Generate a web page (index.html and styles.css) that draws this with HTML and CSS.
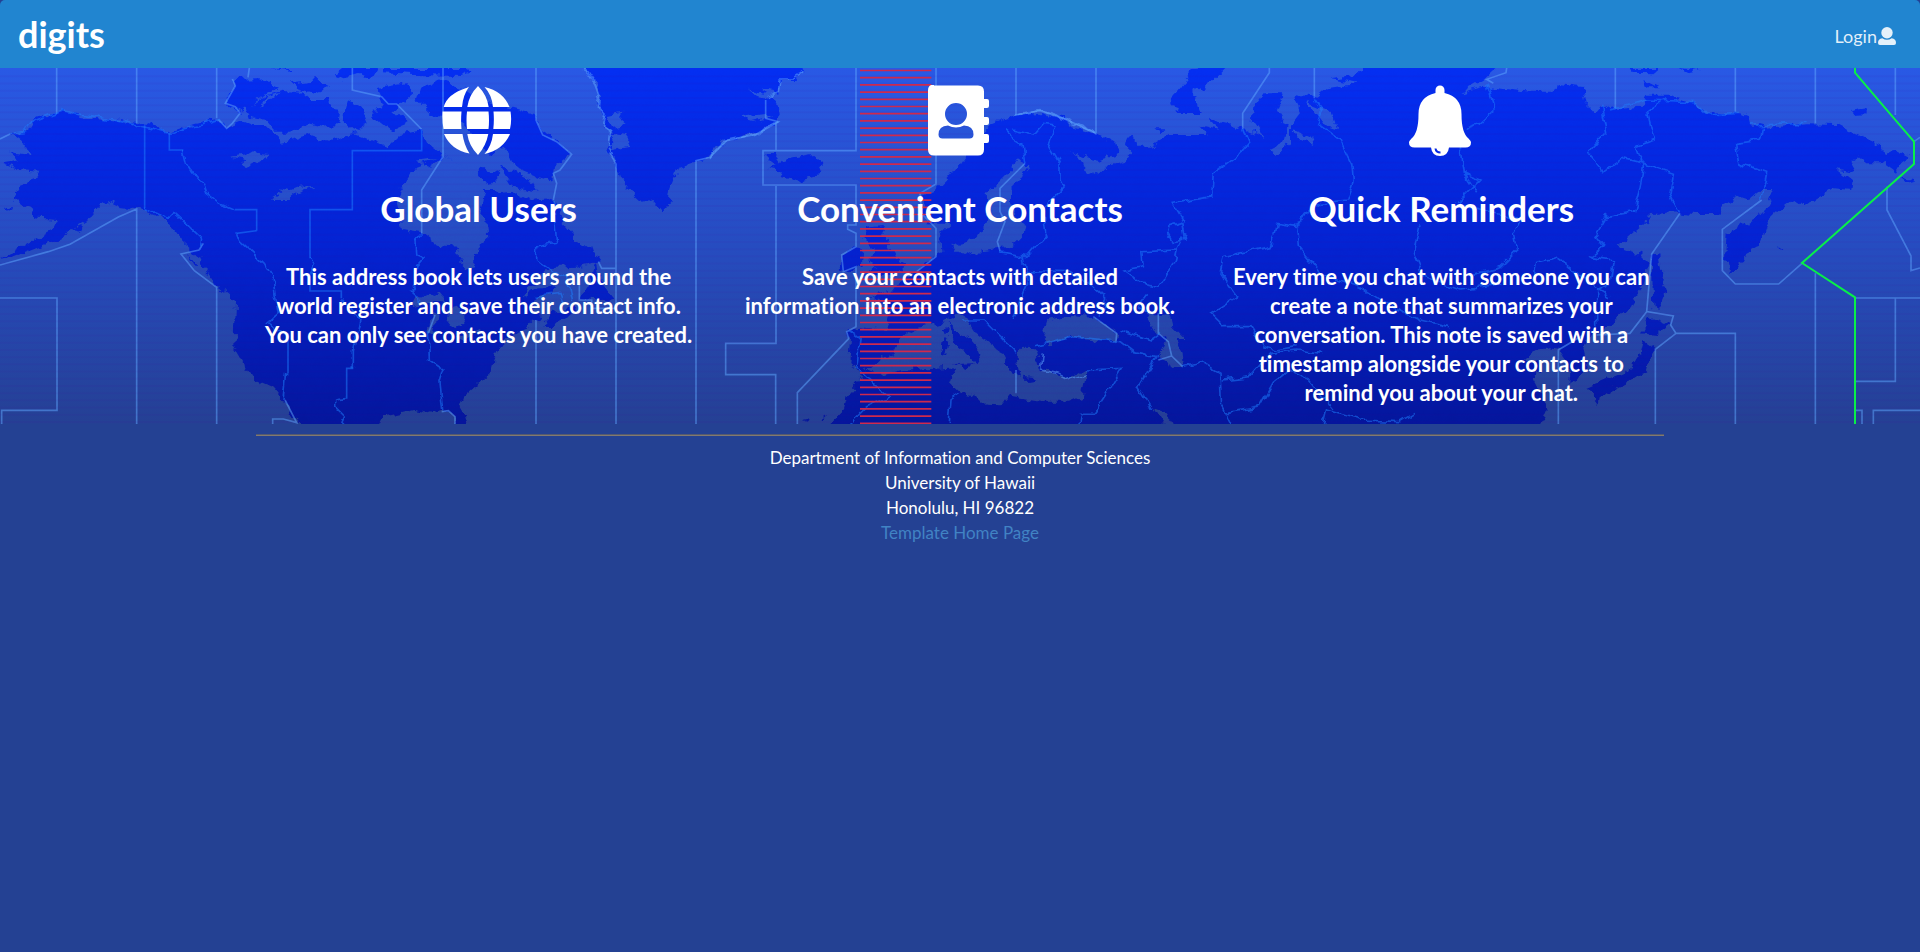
FILE: index.html
```html
<!DOCTYPE html>
<html lang="en">
<head>
<meta charset="utf-8">
<title>digits</title>
<link rel="stylesheet" href="styles.css">
</head>
<body>
<header class="navbar">
  <a class="brand" href="#">digits</a>
  <a class="login" href="#">Login<svg class="user-icon" viewBox="0 0 18 18" aria-hidden="true"><circle cx="9" cy="5.7" r="5.7"/><path d="M4.3 11.2q4.7 3 9.4 0Q18 11.6 18 16q0 2-2 2H2q-2 0-2-2Q0 11.600 4.300 11.200Z"/></svg></a>
</header>
<main class="hero">
  <svg class="map" viewBox="0 204 5760 1068" preserveAspectRatio="xMidYMin slice" aria-hidden="true">
    <defs>
      <linearGradient id="sea" gradientUnits="userSpaceOnUse" x1="0" y1="204" x2="0" y2="1272">
        <stop offset="0" stop-color="#2959e5"/><stop offset=".5" stop-color="#264cc0"/><stop offset="1" stop-color="#254094"/>
      </linearGradient>
      <linearGradient id="ground" gradientUnits="userSpaceOnUse" x1="0" y1="204" x2="0" y2="1272">
        <stop offset="0" stop-color="#042ff2"/><stop offset=".5" stop-color="#0423d2"/><stop offset="1" stop-color="#04169c"/>
      </linearGradient>
      <filter id="coast" filterUnits="userSpaceOnUse" x="-40" y="160" width="5840" height="1160" color-interpolation-filters="sRGB">
        <feTurbulence type="fractalNoise" baseFrequency=".03" numOctaves="3" seed="4"/>
        <feDisplacementMap in="SourceGraphic" scale="34" xChannelSelector="R" yChannelSelector="G"/>
      </filter>
      <filter id="border" filterUnits="userSpaceOnUse" x="-40" y="160" width="5840" height="1160" color-interpolation-filters="sRGB">
        <feTurbulence type="fractalNoise" baseFrequency=".03" numOctaves="2" seed="9"/>
        <feDisplacementMap in="SourceGraphic" scale="26" xChannelSelector="R" yChannelSelector="G"/>
      </filter>
    </defs>
    <rect class="water" x="0" y="204" width="5760" height="1068"/>

    <g filter="url(#coast)">
      <!-- North America -->
      <path class="land" d="M30 402 75 398 95 365 130 348 185 332 245 348 350 362 410 368 470 382 508 400 585 375 655 358 680 385 730 365 760 378 800 378 850 425 930 405 990 425 1065 400 1120 420 1165 440 1200 405 1265 390 1290 440 1330 470 1400 500 1440 570 1480 570 1500 585 1550 580 1590 600 1650 595 1670 615 1680 660 1705 690 1720 715 1760 745 1800 770 1795 785 1730 800 1640 805 1610 830 1570 890 1610 862 1665 862 1655 880 1605 905 1595 930 1630 950 1600 962 1580 985 1540 1000 1500 1040 1480 1080 1475 1120 1440 1150 1395 1190 1385 1220 1405 1290 1372 1290 1360 1245 1320 1230 1290 1240 1240 1230 1200 1240 1150 1250 1130 1290 920 1290 880 1250 850 1200 820 1165 760 1140 735 1100 700 1040 705 910 690 890 640 850 610 800 590 760 545 720 510 670 470 640 435 628 360 618 320 600 265 660 200 700 120 740 50 768 0 780 60 745 160 690 175 660 100 655 95 620 40 600 35 580 55 555 110 535 115 515 60 510 5 487 60 478 30 455 90 465 75 435Z"/>
      <!-- Arctic islands -->
      <path class="land" d="M697 237 775 235 840 262 790 285 725 335 675 310 706 258ZM740 322 790 290 850 272 905 278 930 300 985 300 1020 340 1015 375 965 380 920 370 870 395 830 395 800 360 750 350ZM810 204 890 204 870 210ZM1020 204 1130 204 1110 240 1080 225 1030 235 1000 220ZM1145 204 1400 204 1420 215 1390 228 1240 225 1150 220ZM870 250 950 240 990 262 940 285 890 270ZM1040 300 1080 320 1100 370 1060 395 1030 370ZM1130 265 1220 250 1240 280 1180 330 1220 370 1170 390 1120 350 1145 310ZM1260 265 1320 240 1400 270 1440 300 1520 320 1610 345 1625 390 1680 425 1715 460 1665 500 1660 545 1610 530 1540 500 1520 455 1500 440 1470 465 1430 430 1400 380 1340 360 1290 340 1250 300ZM1440 500 1500 520 1470 555 1430 530ZM1500 495 1600 545 1610 575 1540 560Z"/>
      <!-- Greenland -->
      <path class="land" d="M1750 190 1765 215 1785 255 1800 290 1795 320 1818 345 1810 380 1835 395 1825 450 1850 490 1870 545 1900 585 1925 608 1960 600 1985 630 2010 600 2015 560 2040 500 2090 482 2140 460 2175 420 2270 400 2330 365 2342 350 2340 320 2300 290 2290 265 2335 275 2340 240 2375 240 2410 215 2400 190Z"/>
      <path class="water" d="M1820 345 1870 335 1860 355 1880 372 1830 380ZM1840 400 1880 405 1875 430 1890 440 1835 450ZM2220 355 2290 345 2320 350 2260 365ZM2250 272 2300 285 2330 300 2270 290Z"/>
      <!-- Iceland, Newfoundland, Nova Scotia -->
      <path class="land" d="M2300 465 2325 465 2340 485 2380 475 2440 465 2470 490 2450 525 2390 542 2345 530 2350 515 2305 510 2330 497 2300 487ZM1770 850 1790 780 1800 840 1840 890 1830 905 1740 895ZM1630 975 1660 935 1710 925 1740 935 1660 975Z"/>
      <!-- Hudson Bay and lakes -->
      <path class="water" d="M1330 470 1245 500 1200 570 1190 610 1200 650 1210 690 1265 700 1310 735 1370 740 1375 780 1405 815 1425 790 1430 745 1465 715 1462 675 1435 650 1450 575 1430 510ZM1250 485 1330 475 1290 500ZM690 470 740 462 760 450 780 462 808 465 770 485 740 500 720 498 740 480ZM815 600 850 580 840 565 870 572 900 560 945 558 900 575 870 600ZM800 290 840 280 860 265 780 320ZM1250 895 1290 875 1320 885 1340 910 1280 910 1240 915ZM1285 1000 1295 930 1310 945 1300 1010ZM1340 930 1370 920 1400 950 1385 970 1365 985 1345 960ZM1370 1010 1430 985 1440 990 1390 1020Z"/>
      <!-- British Isles -->
      <path class="land" d="M2605 680 2655 675 2635 708 2660 720 2685 770 2715 790 2710 812 2640 822 2590 832 2630 800 2605 775 2625 750 2590 715ZM2570 738 2592 760 2588 800 2530 815 2525 765Z"/>
      <!-- Eurasia and North Africa -->
      <path class="land" d="M2470 1290 2530 1230 2540 1190 2590 1135 2570 1100 2545 1090 2550 1020 2540 985 2580 980 2655 990 2670 940 2640 905 2615 885 2680 870 2750 815 2780 785 2825 760 2820 700 2845 672 2785 670 2765 640 2770 590 2805 575 2840 540 2880 490 2920 430 2950 400 2980 370 3045 345 3120 335 3190 355 3230 385 3285 400 3340 430 3350 462 3300 480 3230 465 3210 450 3250 485 3260 515 3290 530 3325 495 3380 480 3400 460 3375 430 3380 410 3400 408 3410 440 3450 440 3510 405 3620 405 3600 380 3660 395 3630 360 3720 380 3790 410 3755 360 3760 320 3790 280 3850 280 3830 330 3860 380 3850 430 3800 455 3840 465 3870 430 3870 380 3900 340 3880 300 3890 280 3950 290 3980 265 4080 250 3990 235 4060 225 4105 190 4505 190 4450 240 4380 280 4450 260 4590 275 4665 275 4670 255 4750 265 4760 310 4785 340 4805 315 4830 330 4920 320 4940 290 5000 290 5080 310 5120 345 5220 340 5245 350 5250 370 5290 380 5370 375 5420 370 5510 372 5560 400 5650 440 5655 460 5690 450 5730 470 5700 490 5685 515 5650 490 5590 490 5570 475 5550 520 5510 510 5555 545 5550 570 5500 565 5450 595 5410 625 5380 600 5345 625 5310 655 5295 700 5275 740 5240 760 5220 800 5190 825 5175 770 5180 700 5235 670 5290 640 5320 570 5285 570 5250 600 5220 590 5170 615 5155 645 5080 645 5020 640 4960 645 4920 680 4850 740 4920 765 4945 790 4930 860 4880 930 4830 980 4780 1005 4750 1050 4760 1100 4730 1145 4705 1140 4710 1100 4675 1050 4640 1045 4610 1050 4570 1075 4630 1090 4600 1135 4630 1190 4640 1230 4615 1290Z"/>
      <!-- Inland seas -->
      <path class="water" d="M2590 1115 2640 1125 2700 1110 2850 1100 2865 1110 2850 1150 2880 1180 2930 1190 2960 1220 3005 1222 3030 1190 3120 1205 3210 1205 3245 1190 3260 1110 3210 1140 3170 1120 3125 1110 3110 1050 3080 1040 3050 1070 3060 1130 3030 1110 3000 1050 2930 1000 2890 940 2830 965 2750 985 2700 1020 2680 1060ZM3030 510 3050 480 3090 495 3060 540 3030 570 3030 610 3080 690 3030 740 2940 750 2920 770 2880 750 2850 735 2930 715 2965 650 2960 580ZM3145 960 3130 1010 3150 1030 3220 1010 3300 1020 3350 1025 3355 1000 3280 950 3210 945ZM3440 945 3470 1000 3500 1020 3475 1080 3520 1105 3548 1100 3545 1050 3530 1020 3560 1020 3520 980 3510 940ZM3460 1225 3490 1235 3530 1290 3500 1290ZM3920 300 3990 330 4010 390 3980 380ZM3880 390 3930 410 3940 435 3890 410Z"/>
      <path class="land" d="M2840 965 2880 1000 2910 1020 2945 1060 2925 1092 2900 1060 2860 1030ZM2830 1020 2842 1025 2835 1065 2822 1060ZM2828 985 2840 980 2836 1010ZM2865 1092 2915 1090 2900 1110ZM3010 1075 3050 1100 3040 1125ZM3070 1130 3110 1135 3080 1140Z"/>
      <!-- Northern and Pacific islands -->
      <path class="land" d="M3600 190 3690 190 3640 240 3580 280 3605 345 3540 345 3510 300 3550 250ZM3625 350 3660 368 3640 375ZM3460 385 3490 385 3480 400ZM4880 204 4980 204 4960 220 4900 218ZM5030 204 5100 210 5060 220ZM4930 240 4980 265 4940 265ZM5550 330 5600 322 5600 340 5560 342ZM4955 765 4975 760 4985 830 5000 870 4975 930 4960 920ZM4950 950 5010 975 4970 1005 4925 1000ZM4930 1020 4960 1040 4940 1110 4880 1150 4820 1180 4790 1205 4760 1165 4840 1130 4890 1110 4920 1060ZM5700 535 5745 545 5720 552ZM5330 735 5350 748 5345 752ZM520 650 600 720 600 740 550 710ZM560 760 590 800 580 800ZM640 850 730 890 725 905 680 880ZM215 690 250 675 240 695ZM15 625 40 618 35 630ZM2405 1260 2430 1255 2420 1265ZM2460 1255 2475 1245 2465 1262Z"/>
    </g>

    <!-- Time zone lines over water -->
    <path class="zone" d="M170 204V342M410 204V370M650 204V355M748 204 744 232M697 237 706 258 676 310 706 320 720 340 697 370 680 385 655 358M0 417 30 402M0 795 145 755 210 733 355 651 410 627V1272M650 1272V862L583 812 543 762 597 750 610 730M0 894H171V1231H5V1272M818 1272V1257H850L890 1268 855 1200M1057 204V270L1145 290 1165 312H1190L1265 388M1329 204V470L1265 570V700M1285 1000 1305 945M1325 1235 1345 1232 1365 1250V1272M1608 204V360L1628 405 1670 425 1715 463 1680 510 1660 520 1670 550 1660 600M1608 960V1272M1848 1272V490M2088 1272V482L2130 472 2180 422 2270 402 2335 365 2297 355V300M2328 370V452M2328 558V1030H2177V1124H2327V1272M2568 204V452H2289V555H2568V675H2543V688L2568 700V740L2525 765 2530 815 2568 800V980L2540 995 2546 1016 2392 1178V1272M2808 204V552L2760 580 2765 640 2808 685V770L2750 815M3048 204V345L3120 332 3190 355 3288 400V204M3075 490 3000 565V635L3015 665 2992 725 3000 752M3048 1110V1180M3280 950 3350 1000 3348 1025M3475 940V1000L3505 1025 3515 1068 3475 1080M3515 1068 3548 1100M3808 204V218L3728 340V388M3943 204V295M4520 204 4518 218 4460 238 4480 250M4846 204V325M5206 204V336M5446 204V370M5686 204V345M5040 640 4955 762 4940 935 5020 948 5012 975 5028 1000H5206V1272M5028 1000 4966 1048V1272M4940 935 4890 1000 4790 1005M4750 1005 4675 1050V1272M5285 600 5167 688V812L5206 852H5336L5406 790M5446 820V1272M5565 894H5760M5565 1144H5686V894M5565 1231H5586V1272M5620 1272V1231H5760M5661 560V630L5733 768V812L5760 804M5742 425 5760 412M1795 785 1805 805H1848M1738 830V900H1775V925H1848"/>
    <path class="zone" filter="url(#border)" d="M1750 204 1785 255 1798 290 1795 320 1818 345 1810 380 1832 395 1825 450 1850 490M2130 472 2175 422 2270 402 2335 365M2300 290 2335 275 2340 240 2375 240 2410 215M3048 345 3120 332 3190 355 3288 400M3130 1060 3125 1110 3170 1120 3210 1140 3260 1125"/>
    <!-- Time zone lines over land -->
    <path class="zone inland" d="M434 376V625M508 400V450H550M705 629H770V692M770 692 710 700M1265 390V452H1057V629H930V775M930 820V873H1024V895M864 1000V1120M1040 1196V1105H1060"/>
    <path class="zone inland" filter="url(#border)" d="M30 402 75 398 95 365 185 332 350 362 508 400 600 375 655 358M434 625 500 655 520 635 605 715 600 750M550 450 560 490 575 515 610 550 620 580 660 610 705 629M710 700 720 725 790 790 820 840 825 880 835 940 800 970 864 1005M860 1120 852 1200M930 775 945 790 930 820M1024 895 1080 960 1060 1050 1060 1105M1040 1196 1010 1200 1010 1225 1035 1250 1025 1272M1265 700 1248 720 1250 765 1272 775 1250 800 1250 850 1232 875 1260 900M1285 1000 1288 1080 1332 1110 1320 1150 1328 1230M1660 600 1670 730 1610 740 1610 780 1650 810 1700 830 1715 900M1610 890 1680 880 1690 910M3040 390 3100 405 3130 370 3165 375 3145 430 3180 490 3180 540 3190 560 3130 625 3140 700 3080 770 3000 755M3020 395 3065 430 3075 490M3070 770 3080 850 3060 900 3040 960M3080 812 3200 815 3280 860 3320 900 3300 950M3480 860 3425 850 3370 810 3430 800 3425 755 3530 750 3520 790 3480 860M3505 700 3510 680 3545 670 3555 720 3520 725ZM3530 750 3555 700M3555 670 3520 610 3635 590 3640 520 3720 460 3745 430 3728 388M3943 295 3965 330 3950 370 4020 420 4055 490 4060 540 4040 600 3960 610 3915 640 3890 680 3830 670 3820 710 3810 740 3670 770 3660 820 3710 890 3630 940 3670 980 3750 980 3790 1040 3830 1050 3890 1040M3890 680 3895 740 3960 820 4080 860 4160 910 4260 960 4350 980M3440 880 3410 920 3460 945M2880 960 2950 960 3050 1060M3110 1040 3220 1010 3360 1025 3400 1055 3470 1070 3415 1160 3455 1225M3360 990 3450 1020 3480 1000M3260 1110 3365 1105 3320 1180 3280 1240 3245 1240 3240 1272M3548 1100 3600 1085 3660 1120 3665 1220 3690 1272M3665 1140 3750 1130 3810 1060 3890 1050 3970 1060M3670 1240 3780 1220 3820 1150 3870 1110 3920 1130 4000 1230M3970 1272 3980 1230 4080 1260 4200 1265 4240 1240M2546 990 2580 1015 2570 1100 2610 1140 2670 1190 2600 1220 2550 1272M2880 1180 2850 1200 2845 1272M4460 250 4485 330 4440 370 4400 385M4380 440 4390 520 4440 540 4370 610 4450 630 4560 660 4540 700 4550 750 4500 800 4420 820M4390 520 4430 580M4260 670 4240 760 4270 830 4380 870 4510 850M4600 840 4610 790 4670 775 4720 810 4780 860 4830 890M4805 320 4820 400 4765 460 4810 515 4870 475 4930 490 5020 520 5010 580 5040 640M5000 295 4940 340 4960 420 4910 440 4930 500 4920 560 4900 635 4820 650 4785 710 4810 740 4770 770 4840 780 4830 850 4790 870 4790 1000M5290 380 5285 420 5210 430 5220 490 5300 520 5285 600M4830 330 4940 300 5080 305 5120 345 5220 340M5250 375 5420 370"/>

    <path class="prime" d="M2687 209V1272"/>
    <path class="scan" d="M2880 226V1272"/>
    <path class="dateline" d="M5565 1272V892L5406 789 5742 492V425Q5660 330 5565 218V204"/>
  </svg>

  <div class="features">
    <section class="feature">
      <svg class="icon" viewBox="0 0 72 72" aria-hidden="true"><path d="M25 2.700Q5 9 1.700 22H20Q21 10 27 1.700ZM36 1Q27 10 25.300 22h21.400Q45 10 36 1ZM42.500 2Q50 10 51 22h16.500Q61 6 42.500 2ZM.5 26.500h19q-.8 9 0 17.500h-18q-1.500-8-1-17.500ZM25 26.500h21.500q1 9 0 17.500H25q-1-9 0-17.500ZM51.500 26.500h17q1.500 9-.5 17.500H51.300q1-9 .2-17.500ZM2 49h18.500q1.500 11 7 19.500Q9 65 2 49ZM25.300 49h21Q44 61 36 70 27 61 25.300 49ZM51 49h17Q61 65 42.500 69 49.500 61 51 49Z"/></svg>
      <h1 class="title">Global Users</h1>
      <h3 class="text">This address book lets users around the world register and save their contact info. You can only see contacts you have created.</h3>
    </section>
    <section class="feature">
      <svg class="icon" viewBox="0 0 72 72" aria-hidden="true"><path fill-rule="evenodd" d="M11 .5H55q6 0 6 6V14h3q2 0 2 2v5q0 2-2 2h-3v9h3q2 0 2 2v4q0 2-2 2h-3v9h3q2 0 2 2v5q0 2-2 2h-3v6.500q0 6-6 6H11q-6 0-6-6v-59q0-6 6-6ZM33 18a11 11 0 1 0 0 22 11 11 0 0 0 0-22ZM25 40.500q8 4 16 0 9.500.5 9.500 9 0 4-4 4h-27q-4 0-4-4 0-8.500 9.500-9Z"/></svg>
      <h1 class="title">Convenient Contacts</h1>
      <h3 class="text">Save your contacts with detailed<br>information into an electronic address book.</h3>
    </section>
    <section class="feature">
      <svg class="icon" viewBox="0 0 72 72" aria-hidden="true"><path fill-rule="evenodd" d="M31.500 8V5a4.500 4.500 0 0 1 9 0v3Q57.500 12 57.500 29q0 19 7 24.500Q67 56 67 57.500q0 5-5.500 5H45Q44 71 36 71t-9-8.500H10.500Q5 62.500 5 57.500 5 56 7.500 53.500q7-5.500 7-24.500 0-17 17-21ZM30.500 63.500q.5 5 6 5v-2q-3.500 0-4-3Z"/></svg>
      <h1 class="title">Quick Reminders</h1>
      <h3 class="text">Every time you chat with someone you can create a note that summarizes your conversation. This note is saved with a timestamp alongside your contacts to<br>remind you about your chat.</h3>
    </section>
  </div>
</main>
<footer class="footer">
  <hr class="rule">
  <div>Department of Information and Computer Sciences</div>
  <div>University of Hawaii</div>
  <div>Honolulu, HI 96822</div>
  <a class="home-link" href="#">Template Home Page</a>
</footer>
</body>
</html>
```
FILE: styles.css
```css
* {
  box-sizing: border-box;
}

body {
  margin: 0;
  background: #244193;
  color: #fff;
  font-family: Lato, "Liberation Sans", sans-serif;
  font-size: 17px;
  font-variant-ligatures: none;
  line-height: 25px;
}

.navbar {
  display: flex;
  align-items: center;
  justify-content: space-between;
  height: 68px;
  padding: 0 24px 0 18px;
  background: #2185d0;
  border-radius: 5px 5px 0 0;
}

.brand {
  color: #fff;
  font-size: 36px;
  font-weight: 700;
  line-height: 46px;
  text-decoration: none;
}

.login {
  display: flex;
  align-items: center;
  gap: 1px;
  padding-top: 4px;
  color: rgba(255, 255, 255, 0.88);
  font-size: 18px;
  text-decoration: none;
}

.user-icon {
  width: 18px;
  height: 18px;
  fill: currentColor;
}

.hero {
  position: relative;
  overflow: hidden;
}

.map {
  position: absolute;
  inset: 0;
  width: 100%;
  height: 100%;
}

.water {
  fill: url(#sea);
}

.land {
  fill: url(#ground);
}

.zone {
  fill: none;
  stroke: rgba(95, 170, 255, 0.5);
  stroke-width: 5;
}

.inland {
  stroke: rgba(30, 130, 255, 0.5);
}

.prime {
  fill: none;
  stroke: #d02a4c;
  stroke-width: 214;
  stroke-dasharray: 5 16.6;
}

.scan {
  fill: none;
  stroke: rgba(70, 0, 150, 0.05);
  stroke-width: 5760;
  stroke-dasharray: 6 15.6;
}

.dateline {
  fill: none;
  stroke: #08f048;
  stroke-width: 6;
}

.features {
  position: relative;
  display: grid;
  grid-template-columns: repeat(3, 1fr);
  max-width: 1444px;
  margin: 0 auto;
}

.feature {
  padding: 17px 18px;
  text-align: center;
}

.icon {
  display: block;
  width: 72px;
  height: 72px;
  margin: 0 auto;
  padding-right: 2px;
  box-sizing: content-box;
  fill: #fff;
}

.title {
  margin: 28px 0 31px;
  font-size: 35px;
  font-weight: 700;
  line-height: 46px;
}

.text {
  margin: 0;
  font-size: 22px;
  font-weight: 700;
  line-height: 29px;
}

.footer {
  width: calc(100% - 36px);
  max-width: 1408px;
  margin: 0 auto;
  padding-top: 10px;
  text-align: center;
}

.rule {
  height: 2px;
  margin: 0 0 9px;
  border: 0;
  border-top: 1px solid #555a70;
  border-bottom: 1px solid #827a70;
}

.home-link {
  color: #4183c4;
  text-decoration: none;
}
```
